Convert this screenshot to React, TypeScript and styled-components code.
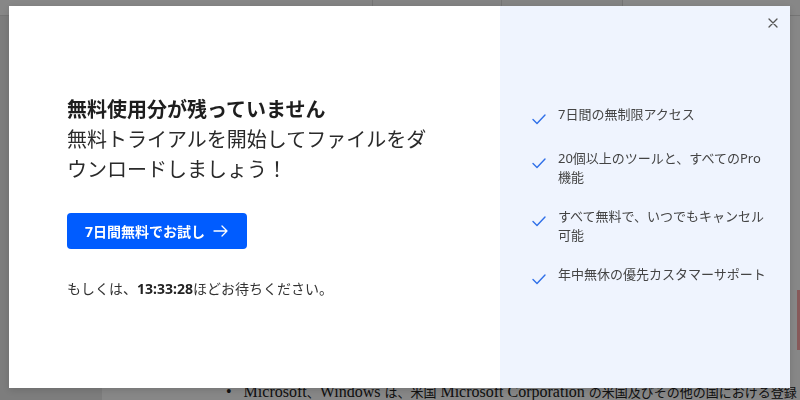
import React from "react";
import styled, { createGlobalStyle } from "styled-components";

const Global = createGlobalStyle`
  html, body { margin: 0; padding: 0; }
  body {
    width: 800px; height: 400px; overflow: hidden;
    font-family: "Noto Sans", "Noto Sans CJK JP", sans-serif;
    background: #ffffff;
  }
`;

const Page = styled.div`
  width: 800px;
  height: 400px;
  display: grid;
  grid-template-columns: 102px 1fr 14px;
  grid-template-rows: 16px 1fr 24px;
  background: #fff;
`;

const TopBar = styled.div`
  grid-column: 1 / 4;
  display: flex;
  border-bottom: 1px solid #ddd;
  padding-left: 250px;
`;

const Tab = styled.div<{ $w: number }>`
  width: ${(p) => p.$w}px;
  border-right: 1px solid #ddd;
  background: #f7f7f7;
`;

const Side = styled.div`
  grid-row: 2 / 4;
  background: #ececec;
`;

const Main = styled.div`
  grid-column: 2;
  grid-row: 2 / 4;
  display: flex;
  flex-direction: column;
  justify-content: flex-end;
  padding-left: 124px;
  padding-bottom: 1px;
`;

const BgText = styled.div`
  font-family: "Liberation Serif", serif;
  font-size: 16px;
  color: #222;
  white-space: nowrap;
  line-height: 14px;
`;

const BgJa = styled.span`
  font-family: "Noto Sans CJK JP", serif;
  font-size: 13px;
`;

const RightStrip = styled.div`
  grid-column: 3;
  grid-row: 2 / 4;
  display: flex;
  flex-direction: column;
  padding-top: 274px;
`;

const RedBox = styled.div`
  height: 60px;
  background: #ffa8a8;
`;

const Overlay = styled.div`
  position: fixed;
  inset: 0;
  background: rgba(0, 0, 0, 0.47);
  display: flex;
  align-items: flex-start;
  padding: 6px 10px 0 9px;
`;

const Modal = styled.div`
  width: 781px;
  height: 382px;
  display: flex;
  background: #fff;
  box-shadow: 0 2px 8px rgba(0, 0, 0, 0.15);
`;

const Left = styled.div`
  width: 491px;
  box-sizing: border-box;
  padding: 0 0 0 58px;
  display: flex;
  flex-direction: column;
  justify-content: center;
`;

const Title = styled.h2`
  margin: 0;
  font-size: 20px;
  line-height: 30px;
  font-weight: 700;
  color: #1e1e1e;
`;

const Sub = styled.p`
  margin: 0;
  font-size: 20px;
  line-height: 30px;
  font-weight: 400;
  color: #2a2a2a;
  width: 372px;
`;

const CTA = styled.button`
  margin-top: 28px;
  align-self: flex-start;
  width: 180px;
  height: 36px;
  border: none;
  border-radius: 4px;
  background: #005cff;
  color: #fff;
  font-family: inherit;
  font-size: 14px;
  font-weight: 700;
  display: flex;
  align-items: center;
  justify-content: center;
  gap: 8px;
  padding: 0;
  cursor: pointer;
`;

const Wait = styled.p`
  margin: 30px 0 0;
  font-size: 14px;
  line-height: 20px;
  color: #333;
  b { font-weight: 700; color: #222; }
`;

const Right = styled.div`
  flex: 1;
  background: #eff4fe;
  position: relative;
  display: flex;
  flex-direction: column;
  justify-content: center;
  padding: 0 16px 0 32px;
  gap: 20px;
`;

const Close = styled.button`
  position: absolute;
  top: 10px;
  right: 10px;
  width: 14px;
  height: 14px;
  border: none;
  background: transparent;
  padding: 0;
  display: flex;
  align-items: center;
  justify-content: center;
  cursor: pointer;
`;

const Item = styled.div`
  display: flex;
  align-items: flex-start;
  gap: 12px;
  font-size: 13px;
  line-height: 19px;
  color: #444;
`;

const CheckWrap = styled.span`
  flex: none;
  width: 14px;
  height: 19px;
  display: flex;
  align-items: center;
  padding-top: 5px;
`;

const ItemText = styled.span`
  width: 212px;
`;

const Check = () => (
  <svg width="14" height="11" viewBox="0 0 14 11" fill="none">
    <path d="M1 5.5 L5 9.5 L13 1" stroke="#2f6fe8" strokeWidth="1.4" strokeLinecap="round" strokeLinejoin="round" />
  </svg>
);

const items = [
  "7日間の無制限アクセス",
  "20個以上のツールと、すべてのPro機能",
  "すべて無料で、いつでもキャンセル可能",
  "年中無休の優先カスタマーサポート",
];

export default function App() {
  return (
    <>
      <Global />
      <Page>
        <TopBar>
          <Tab $w={122} />
          <Tab $w={128} />
          <Tab $w={120} />
        </TopBar>
        <Side />
        <Main>
          <BgText>
            •&nbsp;&nbsp; Microsoft<BgJa>、</BgJa>Windows <BgJa>は、米国</BgJa> Microsoft Corporation <BgJa>の米国及びその他の国における登録</BgJa>
          </BgText>
        </Main>
        <RightStrip>
          <RedBox />
        </RightStrip>
      </Page>
      <Overlay>
        <Modal>
          <Left>
            <Title>無料使用分が残っていません</Title>
            <Sub>無料トライアルを開始してファイルをダウンロードしましょう！</Sub>
            <CTA>
              7日間無料でお試し
              <svg width="16" height="12" viewBox="0 0 16 12" fill="none">
                <path d="M1 6 H14 M9 1 L14 6 L9 11" stroke="#fff" strokeWidth="1.3" strokeLinecap="round" strokeLinejoin="round" />
              </svg>
            </CTA>
            <Wait>
              もしくは、<b>13:33:28</b>ほどお待ちください。
            </Wait>
          </Left>
          <Right>
            <Close aria-label="close">
              <svg width="10" height="10" viewBox="0 0 10 10">
                <path d="M1 1 L9 9 M9 1 L1 9" stroke="#555" strokeWidth="1.3" strokeLinecap="round" />
              </svg>
            </Close>
            {items.map((t) => (
              <Item key={t}>
                <CheckWrap>
                  <Check />
                </CheckWrap>
                <ItemText>{t}</ItemText>
              </Item>
            ))}
          </Right>
        </Modal>
      </Overlay>
    </>
  );
}
